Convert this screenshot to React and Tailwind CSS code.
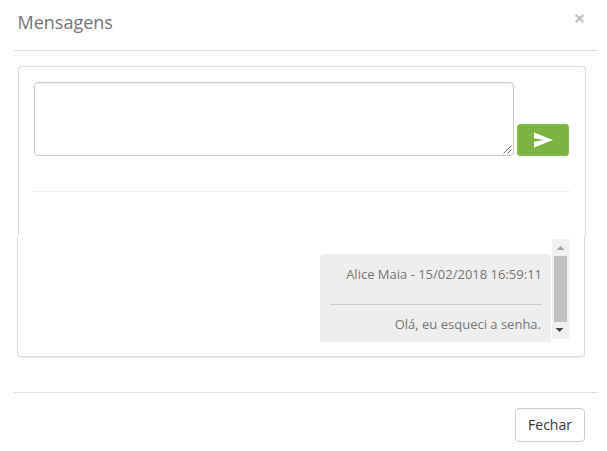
function Header() {
  return (
    <header className="ml-[14px] flex h-[51px] w-[584px] items-start justify-between border-b border-[#e0e0e0] pl-[3.5px] pr-[14px]">
      <h4 className="mt-[9px] text-[18px] leading-[26px] text-[#757575]">Mensagens</h4>
      <button aria-label="Fechar janela" className="mt-[14px] text-[#c4c4c4]">
        <svg width="9" height="9" viewBox="0 0 9 9" stroke="currentColor" strokeWidth="2.3">
          <path d="M.8 .8l7.400 7.400M8.200 .8l-7.400 7.400" />
        </svg>
      </button>
    </header>
  );
}

function Composer() {
  return (
    <section className="ml-[18px] mt-[15px] h-[171px] w-[568px] rounded-t border border-b-0 border-[#dddddd] px-[15px] pt-[15px]">
      <div className="flex items-end gap-[3px]">
        <div className="flex h-[74px] w-[480px] items-end justify-end rounded border border-[#c8c8c8] shadow-[inset_0_1px_1px_rgba(0,0,0,0.075)]">
          <svg width="10" height="10" viewBox="0 0 10 10" stroke="#555555" strokeWidth="0.9">
            <path d="M0.5 8.5l8-8M4.5 8.5l4-4" />
          </svg>
        </div>
        <button aria-label="Enviar" className="flex h-8 w-[52px] items-center justify-center rounded-[3px] border border-[#82c046] bg-[#7cb342]">
          <svg className="ml-px" width="19" height="16" viewBox="0 0 19 16" fill="#ffffff">
            <path d="M0 .5L19 8 0 15.5V9.700L9.500 8 0 6.300z" />
          </svg>
        </button>
      </div>
      <hr className="mt-[35px] border-[#eeeeee]" />
    </section>
  );
}

function Scrollbar() {
  return (
    <div className="ml-px mt-[2px] flex h-[100px] w-[17px] flex-col items-center bg-[#f0f0f0]">
      <svg className="shrink-0" width="17" height="17" viewBox="0 0 17 17" fill="#a0a0a0">
        <path d="M4.500 11L8.500 7l4 4z" />
      </svg>
      <div className="h-[66px] w-[13px] bg-[#c1c1c1]" />
      <svg className="shrink-0" width="17" height="17" viewBox="0 0 17 17" fill="#484848">
        <path d="M3.500 6h8l-4 4z" />
      </svg>
    </div>
  );
}

function Messages() {
  return (
    <section className="ml-[17px] flex h-[120px] w-[568px] justify-end rounded-b border border-t-0 border-[#d8d8d8] pr-[15px] shadow-[0_1px_1px_rgba(0,0,0,0.05)]">
      <article className="mt-[17px] h-[88px] w-[231px] rounded-t bg-[#eeeeee] pl-[10px] pr-[9px] text-right text-[13px] leading-[20px] text-[#757575]">
        <p className="whitespace-nowrap pt-[10px]">Alice Maia - 15/02/2018 16:59:11</p>
        <hr className="mt-[20px] border-[#cccccc]" />
        <p className="mt-[9px] pr-px">Olá, eu esqueci a senha.</p>
      </article>
      <Scrollbar />
    </section>
  );
}

export default function App() {
  return (
    <main className="h-[451px] w-[607px] overflow-hidden bg-white font-['Open_Sans',sans-serif]">
      <Header />
      <Composer />
      <Messages />
      <footer className="ml-[14px] mt-[35px] flex w-[584px] justify-end border-t border-[#e0e0e0] pr-[13px] pt-[15px]">
        <button className="h-[34px] w-[70px] rounded border border-[#cccccc] text-[14px] leading-5 text-[#333333]">Fechar</button>
      </footer>
    </main>
  );
}
